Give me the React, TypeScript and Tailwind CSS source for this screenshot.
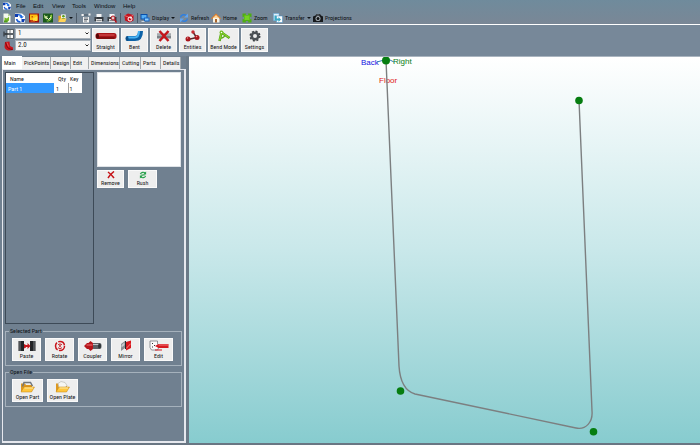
import { useState, type ReactNode } from "react";

function Svg({ box, className, children }: { box: string; className: string; children: ReactNode }) {
  return (
    <svg viewBox={box} className={"block shrink-0 " + className} aria-hidden="true">
      {children}
    </svg>
  );
}

function LogoIcon({ className }: { className: string }) {
  return (
    <Svg box="0 0 20 20" className={className}>
      <path d="M0 1h14l6 5v13H0z" fill="#fff" />
      <path d="M0 2h6v6H0zM13 12h7l-2 6h-5z" fill="#0b3bb0" />
      <path d="M6 2c6 0 8 2 9 5h3l-5 4-5-4h3c-1-2-2-2-5-2z" fill="#1767e0" />
      <path d="M3 12c1 4 4 6 8 6" stroke="#1c5fd6" strokeWidth="3" fill="none" />
    </Svg>
  );
}

function NewIcon() {
  return (
    <Svg box="0 0 16 20" className="h-[10px] w-[8px]">
      <path d="M1 1h9l5 5v13H1z" fill="#f4faee" />
      <path d="M10 1v5h5" fill="#b5d59a" />
      <path d="M3 9l5 2 4-4v8l-4 3-5-2z" fill="#78b82a" />
      <path d="M2 15h7v4H2z" fill="#4d9a1c" />
    </Svg>
  );
}

function YellowIcon() {
  return (
    <Svg box="0 0 20 20" className="size-[10px]">
      <path d="M0 1h20v18H0z" fill="#a11208" />
      <path d="M2 3h15v11H2z" fill="#ffc20e" />
      <path d="M5 6h3v3H5z" fill="#c9530b" />
      <path d="M8 11l9-5v10H8z" fill="#ffdd3c" />
      <path d="M3 16h9" stroke="#f07818" strokeWidth="2" />
    </Svg>
  );
}

function GreenIcon() {
  return (
    <Svg box="0 0 20 20" className="size-[10px]">
      <path d="M0 1h20v18H0z" fill="#1b5a1a" />
      <path d="M2 3l4 4 3-2-1 8-5-3z" fill="#cfe6a0" />
      <path d="M7 15c6 1 8-4 7-10l4-2c1 9-3 14-10 14z" fill="#8cc63e" />
      <path d="M8 10l3 3 5-5" stroke="#f2f8dc" strokeWidth="2" fill="none" />
    </Svg>
  );
}

function OpenPersonIcon() {
  return (
    <Svg box="0 0 20 20" className="size-[9px]">
      <path d="M1 4h6l2 2v12H1z" fill="#e6a31b" />
      <path d="M7 1h10v11H7z" fill="#fff" />
      <circle cx="12" cy="5" r="3" fill="#5a9c1d" />
      <path d="M7 12c1-4 9-4 10 0z" fill="#3b7d12" />
      <path d="M1 18l4-8h14l-3 8z" fill="#ffd257" />
    </Svg>
  );
}

function PageSetupIcon() {
  return (
    <Svg box="0 0 20 20" className="size-[10px]">
      <path d="M1 2h5v4H1zM15 1h4v4h-4zM4 8h12v11H4z" fill="#f2f2f2" />
      <path d="M5 4h9M6 10h8M6 13h8M6 16h6" stroke="#3c4650" strokeWidth="1.5" />
    </Svg>
  );
}

function PrinterIcon({ preview = false }: { preview?: boolean }) {
  return (
    <Svg box="0 0 20 20" className="size-[10px]">
      <path d="M5 2h10v7H5z" fill="#f7f7f7" />
      <path d="M1 8h18v8H1z" fill="#33383e" />
      <path d="M4 12h12v6H4z" fill="#ddd" />
      <path d="M5 15h10M3 10h3" stroke="#6b7075" strokeWidth="1.5" />
      {preview && (
        <>
          <circle cx="12" cy="10" r="4" fill="#e9c7c7" stroke="#b3121c" strokeWidth="2" />
          <path d="M15 13l4 6" stroke="#b3121c" strokeWidth="3" />
        </>
      )}
    </Svg>
  );
}

function RedCubeIcon() {
  return (
    <Svg box="0 0 20 20" className="size-[10px]">
      <path d="M1 5l7-4 11 3v11l-8 4-9-4z" fill="#c4121d" />
      <path d="M1 5l10 4 8-5" stroke="#f18a8a" strokeWidth="1.5" fill="none" />
      <circle cx="12" cy="12" r="4" fill="none" stroke="#fff" strokeWidth="2" />
      <path d="M12 8l4 1-3 3z" fill="#fff" />
    </Svg>
  );
}

function MonitorIcon() {
  return (
    <Svg box="0 0 20 20" className="size-[10px]">
      <path d="M1 2h14v11H1z" fill="#0a4fa8" />
      <path d="M3 4h10v7H3z" fill="#55aef5" />
      <path d="M8 9h11v8H8z" fill="#1666c5" />
      <path d="M10 11h7v4h-7z" fill="#8ccdfc" />
      <path d="M3 16h6v2H3z" fill="#ccd7e0" />
    </Svg>
  );
}

function RefreshIcon() {
  return (
    <Svg box="0 0 20 20" className="size-[10px]">
      <path d="M3 9c1-6 8-7 12-4M17 11c-1 6-8 7-12 4" fill="none" stroke="#2f7fe0" strokeWidth="3" />
      <path d="M18 1v8h-8zM2 19v-8h8z" fill="#5fa4f2" />
    </Svg>
  );
}

function HomeIcon() {
  return (
    <Svg box="0 0 20 20" className="size-[10px]">
      <path d="M4 9h13v10H4z" fill="#fbf3e2" />
      <path d="M0 11L10 1l10 10-2 1-8-7-8 7z" fill="#e87e22" />
      <path d="M10 4l6 6H4z" fill="#ffd9a0" />
      <path d="M8 12h4v7H8z" fill="#a7632a" />
    </Svg>
  );
}

function ZoomIcon() {
  return (
    <Svg box="0 0 20 20" className="size-[10px]">
      <path d="M1 1h8L7 4h6l-2-3h8v8l-3-2v6l3-2v8h-8l2-3H7l2 3H1v-8l3 2V7L1 9z" fill="#4fae12" />
      <path d="M5 5h10v9H5z" fill="#74d024" />
    </Svg>
  );
}

function TransferIcon() {
  return (
    <Svg box="0 0 20 20" className="size-[10px]">
      <path d="M1 1h11v14H1z" fill="#dff1fc" stroke="#5aa5d8" />
      <path d="M7 6h12v13H7z" fill="#fff" stroke="#3f8fc9" />
      <path d="M3 5h4v6h4V8l5 5-5 5v-3H3z" fill="#39a8c4" />
    </Svg>
  );
}

function CameraIcon() {
  return (
    <Svg box="0 0 20 20" className="size-[10px]">
      <path d="M0 7l5-2 2-3h7l2 3 4 2v11H0z" fill="#16191c" />
      <circle cx="10" cy="11" r="5" fill="#a9b2ba" />
      <circle cx="10" cy="11" r="3" fill="#101214" />
      <path d="M7 4h6" stroke="#9aa3ab" strokeWidth="1.5" />
    </Svg>
  );
}

function MachineIcon() {
  return (
    <Svg box="0 0 22 20" className="h-[10px] w-[11px]">
      <path d="M8 1h13v8H8zM8 11h13v8H8z" fill="#f7f7f7" stroke="#3a4046" strokeWidth="1.5" />
      <path d="M14 2v6M14 12v6" stroke="#3a4046" strokeWidth="1.5" />
      <path d="M3 8h6v4H3z" fill="#3a4046" />
      <path d="M2 5v10" stroke="#22262a" strokeWidth="2" />
    </Svg>
  );
}

function DieIcon() {
  return (
    <Svg box="0 0 22 20" className="h-[10px] w-[11px]">
      <path d="M4 2l9-1 1 9 6 3v5l-8 1c-5 0-8-3-9-7z" fill="#c9141c" />
      <path d="M5 3l3 8c1 3 4 5 11 6" stroke="#7d0a0f" strokeWidth="2" fill="none" />
      <path d="M8 3l3 8" stroke="#f2686a" strokeWidth="1.5" />
    </Svg>
  );
}

function StraightIcon() {
  return (
    <Svg box="0 0 44 20" className="h-[10px] w-[22px]">
      <rect x="1" y="4" width="42" height="12" rx="5" fill="#a8161a" />
      <path d="M6 8h33" stroke="#dd5a5a" strokeWidth="2" />
      <path d="M5 14h34" stroke="#64090b" strokeWidth="2" />
      <ellipse cx="5" cy="10" rx="3" ry="5" fill="#520607" />
    </Svg>
  );
}

function BentIcon() {
  return (
    <Svg box="0 0 40 24" className="h-[12px] w-[20px]">
      <path d="M4 17h16q11 0 11-15" stroke="#0c62a8" strokeWidth="10" fill="none" />
      <path d="M5 15h14q9 0 9-13" stroke="#49b2f3" strokeWidth="4" fill="none" />
      <ellipse cx="4" cy="17" rx="3" ry="5" fill="#0a4e88" />
    </Svg>
  );
}

function DeleteIcon() {
  return (
    <Svg box="0 0 32 24" className="h-[12px] w-[16px]">
      <path d="M2 7h28v10H2z" fill="#7c8288" />
      <path d="M2 10h28" stroke="#d0d3d6" strokeWidth="2" />
      <path d="M7 2l18 20M25 2L7 22" stroke="#c4151b" strokeWidth="5" />
    </Svg>
  );
}

function EntitiesIcon() {
  return (
    <Svg box="0 0 30 24" className="h-[12px] w-[15px]">
      <path d="M6 19L23 15 16 4" stroke="#55282b" strokeWidth="3" fill="none" />
      <circle cx="6" cy="18" r="5" fill="#a9151c" />
      <circle cx="24" cy="15" r="5" fill="#a9151c" />
      <circle cx="16" cy="4" r="3.5" fill="#c52a30" />
      <circle cx="23" cy="13" r="1.5" fill="#f08c8c" />
      <circle cx="5" cy="16" r="1.5" fill="#f08c8c" />
    </Svg>
  );
}

function BendModeIcon() {
  return (
    <Svg box="0 0 28 24" className="h-[12px] w-[14px]">
      <path d="M5 22L9 5l16 11" stroke="#4f9e10" strokeWidth="5" fill="none" />
      <path d="M5 21L9 5l15 10" stroke="#8ed633" strokeWidth="2.5" fill="none" />
      <path d="M8 16q6 0 8-6" stroke="#5eae1b" strokeWidth="2.5" fill="none" />
      <circle cx="9" cy="5" r="4" fill="#72bf22" />
      <circle cx="9" cy="5" r="1.5" fill="#fff" />
    </Svg>
  );
}

function GearIcon() {
  return (
    <Svg box="0 0 24 24" className="size-[12px]">
      <circle cx="12" cy="12" r="9.5" fill="none" stroke="#3b3f43" strokeWidth="3" strokeDasharray="4 3.46" />
      <circle cx="12" cy="12" r="6.5" fill="none" stroke="#4b5054" strokeWidth="5" />
    </Svg>
  );
}

function RemoveIcon() {
  return (
    <Svg box="0 0 16 16" className="size-[8px]">
      <path d="M2 2q7 5 12 12M14 1Q7 6 2 14" stroke="#c61217" strokeWidth="3" fill="none" />
    </Svg>
  );
}

function RushIcon() {
  return (
    <Svg box="0 0 18 18" className="size-[8px]">
      <path d="M3 7c2-5 8-5 11-2M15 11c-2 5-8 5-11 2M5 9h8" fill="none" stroke="#23a047" strokeWidth="2.5" />
      <path d="M16 1v7H9zM2 17v-7h7z" fill="#23a047" />
    </Svg>
  );
}

function PasteIcon() {
  return (
    <Svg box="0 0 36 24" className="h-[12px] w-[18px]">
      <path d="M1 2h11v20H1zM24 2h11v20H24z" fill="#222427" />
      <path d="M4 2v20M32 2v20" stroke="#7c8085" strokeWidth="2" />
      <path d="M12 8l4 2v5l-4 2z" fill="#c7161c" />
      <path d="M15 10h4V6l6 6-6 6v-4h-4z" fill="#c7161c" />
    </Svg>
  );
}

function RotateIcon() {
  return (
    <Svg box="0 0 24 24" className="size-[12px]">
      <circle cx="12" cy="12" r="9" fill="none" stroke="#c8151c" strokeWidth="3" strokeDasharray="16 2.85" />
      <path d="M8 10a5 5 0 0 1 8 0M16 15a5 5 0 0 1-8 0" fill="none" stroke="#c8151c" strokeWidth="2" />
      <circle cx="12" cy="12" r="1.8" fill="#c8151c" />
    </Svg>
  );
}

function CouplerIcon() {
  return (
    <Svg box="0 0 36 24" className="h-[12px] w-[18px]">
      <rect x="15" y="6" width="20" height="12" rx="4" fill="#5b6065" />
      <path d="M18 9h13" stroke="#c0c4c8" strokeWidth="2" />
      <ellipse cx="31" cy="12" rx="3" ry="5" fill="#303438" />
      <path d="M0 12l6-6h3l4-4 5 4v12l-5 4-4-4H6z" fill="#b5151b" />
      <path d="M5 10h12" stroke="#ee7074" strokeWidth="2" />
    </Svg>
  );
}

function MirrorIcon() {
  return (
    <Svg box="0 0 26 24" className="h-[12px] w-[13px]">
      <path d="M4 8l8-6v14l-8 6z" fill="#8b9095" />
      <path d="M5 10l6-5v5l-6 5z" fill="#c9cdd1" />
      <path d="M12 2h2v16h-2z" fill="#24272a" />
      <path d="M14 4l10-3v15l-10 5z" fill="#d8171d" />
      <path d="M15 15l8-9v3l-8 9z" fill="#f26a6c" />
    </Svg>
  );
}

function EditPartIcon() {
  return (
    <Svg box="0 0 40 24" className="h-[12px] w-[20px]">
      <path d="M2 2h15v6l4 4-4 8H5l-3-5z" fill="#fafafa" stroke="#6f7478" strokeWidth="1.5" />
      <path d="M6 7h2M10 11h2M6 14h2" stroke="#333" strokeWidth="2" />
      <path d="M12 12l7-4h20v8H19z" fill="#d51b21" />
      <path d="M19 10h19" stroke="#f4797c" strokeWidth="2" />
      <path d="M12 20h14" stroke="#d51b21" strokeWidth="2" />
    </Svg>
  );
}

function FolderIcon({ plate = false }: { plate?: boolean }) {
  return (
    <Svg box="0 0 30 24" className="h-[12px] w-[15px]">
      <path d="M2 5h8l2 3h12v13H2z" fill="#dd9820" />
      {plate ? (
        <path d="M6 5l6-4 8 2 4 6-5 6H8z" fill="#f6f6f2" stroke="#a6a69c" />
      ) : (
        <path d="M5 11L8 3h13l4 7" fill="none" stroke="#72777c" strokeWidth="3" />
      )}
      <path d="M2 22l6-10h21l-6 10z" fill="#ffc63c" stroke="#c28112" />
      <path d="M9 14h17" stroke="#ffe9a4" strokeWidth="2" />
    </Svg>
  );
}

function Caret() {
  return (
    <Svg box="0 0 4 4" className="size-[4px]">
      <path d="M0 1h4L2 3z" fill="#101418" />
    </Svg>
  );
}

function IconButton({ label, icon }: { label: string; icon: ReactNode }) {
  return (
    <button type="button" aria-label={label} className="flex h-3 shrink-0 items-center gap-[2px]">
      {icon}
    </button>
  );
}

function Separator() {
  return <span className="h-[10px] w-px shrink-0 bg-[#4c5a68]" />;
}

function TextTool({ label, icon, caret = false, width }: { label: string; icon: ReactNode; caret?: boolean; width: string }) {
  return (
    <button type="button" className={"flex h-3 shrink-0 items-center gap-[2px] whitespace-nowrap " + width}>
      {icon}
      <span>{label}</span>
      {caret && <Caret />}
    </button>
  );
}

function Tile({ label, icon, size }: { label: string; icon: ReactNode; size: string }) {
  return (
    <button
      type="button"
      className={
        "flex shrink-0 flex-col items-center justify-between whitespace-nowrap border border-[#fafafa] bg-[#eeeeee] text-[6px] leading-[8px] text-[#141414] " +
        size
      }
    >
      <span className="flex flex-1 items-center">{icon}</span>
      <span>{label}</span>
    </button>
  );
}

function Combo({ label, options, icon }: { label: string; options: string[]; icon: ReactNode }) {
  return (
    <label className="flex h-[11px] items-center gap-px">
      {icon}
      <span className="relative block">
        <select
          aria-label={label}
          className="block h-[11px] w-[76px] appearance-none border border-[#a9b1b9] bg-[#f6f6f6] pl-[2px] text-[7px] leading-[9px] text-[#1b1b1b]"
        >
          {options.map((o) => (
            <option key={o}>{o}</option>
          ))}
        </select>
        <svg viewBox="0 0 8 6" className="pointer-events-none absolute top-1 right-[2px] h-[3px] w-1" aria-hidden="true">
          <path d="M1 1l3 3 3-3" fill="none" stroke="#222" strokeWidth="2" />
        </svg>
      </span>
    </label>
  );
}

const tabs = [
  { name: "Main", size: "w-[20px]" },
  { name: "PickPoints", size: "w-[29px]" },
  { name: "Design", size: "w-[20px]" },
  { name: "Edit", size: "w-[18px]" },
  { name: "Dimensions", size: "w-[31px]" },
  { name: "Cutting", size: "w-[21px]" },
  { name: "Parts", size: "w-[20px]" },
  { name: "Details", size: "w-[20px]" },
];

function Group({ title, children }: { title: string; children: ReactNode }) {
  return (
    <fieldset className="mx-[2px] min-w-0 border border-[#a5b1bc] px-[6px] pb-[4px]">
      <legend className="-ml-[3px] px-px text-[6px] leading-[8px] text-[#0c1014]">{title}</legend>
      <div className="flex gap-1 pt-[3px]">{children}</div>
    </fieldset>
  );
}

function Viewport() {
  return (
    <main className="min-w-0 flex-1 border-t border-[#aab5c0] bg-linear-to-b from-white via-[#c9e8ea] to-[#87cccf]">
      <svg viewBox="0 0 511 386" className="block h-full w-full" role="img" aria-label="Bent part model">
        <g transform="translate(-189 -57)" className="font-['Liberation_Sans',sans-serif]">
          <g fontSize="8">
            <text x="361" y="65" fill="#1414e0">Back</text>
            <text x="393" y="64" fill="#0a7d14">Right</text>
            <text x="379" y="83" fill="#e01818">Floor</text>
          </g>
          <path d="M377 62l7-2M388 59l6 3" stroke="#2f7fae" fill="none" />
          <path
            d="M386 60L399 366C400 382 405 391 415 394L576 428C586 430 593 422 592 411L579 100"
            fill="none"
            stroke="#7c7f80"
            strokeWidth="1.4"
          />
          <g fill="#067d10">
            <circle cx="386" cy="60.5" r="4" />
            <circle cx="579" cy="100.5" r="3.8" />
            <circle cx="400.5" cy="391" r="3.8" />
            <circle cx="593.5" cy="431.8" r="3.8" />
          </g>
        </g>
      </svg>
    </main>
  );
}

export default function App() {
  const [tab, setTab] = useState("Main");
  return (
    <div className="flex h-screen flex-col overflow-hidden bg-[#788898] font-['Roboto_Condensed','Liberation_Sans',sans-serif] text-[#0c1014]">
      <header className="bg-linear-to-b from-[#6f8b9c] to-[#7a8796] text-[6px] leading-[8px]">
        <nav className="flex h-3 items-center pl-[3px] font-['Liberation_Sans',sans-serif]">
          <LogoIcon className="mr-[5px] size-[8px]" />
          <button type="button" className="w-[17px] text-left">File</button>
          <button type="button" className="w-[19px] text-left">Edit</button>
          <button type="button" className="w-[20px] text-left">View</button>
          <button type="button" className="w-[22px] text-left">Tools</button>
          <button type="button" className="w-[29px] text-left">Window</button>
          <button type="button" className="w-[20px] text-left">Help</button>
        </nav>
        <div className="flex h-3 items-center pl-[3px]">
          <div className="flex items-center gap-1">
            <IconButton label="New" icon={<NewIcon />} />
            <IconButton label="Part" icon={<LogoIcon className="size-[10px]" />} />
            <IconButton label="Assembly" icon={<YellowIcon />} />
            <IconButton label="Bend" icon={<GreenIcon />} />
          </div>
          <div className="flex w-[23px] justify-end pr-[3px]">
            <IconButton label="Open" icon={<><OpenPersonIcon /><Caret /></>} />
          </div>
          <Separator />
          <div className="flex w-[43px] items-center justify-center gap-[3px]">
            <IconButton label="Page setup" icon={<PageSetupIcon />} />
            <IconButton label="Print" icon={<PrinterIcon />} />
            <IconButton label="Print preview" icon={<PrinterIcon preview />} />
          </div>
          <Separator />
          <div className="flex w-[16px] justify-center">
            <IconButton label="Rotate view" icon={<RedCubeIcon />} />
          </div>
          <Separator />
          <div className="flex pl-[2px]">
            <TextTool label="Display" icon={<MonitorIcon />} caret width="w-[39px]" />
            <TextTool label="Refresh" icon={<RefreshIcon />} width="w-[32px]" />
            <TextTool label="Home" icon={<HomeIcon />} width="w-[31px]" />
            <TextTool label="Zoom" icon={<ZoomIcon />} width="w-[31px]" />
            <TextTool label="Transfer" icon={<TransferIcon />} caret width="w-[40px]" />
            <TextTool label="Projections" icon={<CameraIcon />} width="w-[42px]" />
          </div>
        </div>
      </header>

      <section className="flex h-8 shrink-0 items-start border-t border-white bg-[#778899] pt-[3px] pl-[3px]">
        <div className="mr-px flex flex-col gap-px">
          <Combo label="Machine" options={["1"]} icon={<MachineIcon />} />
          <Combo label="Die radius" options={["2.0"]} icon={<DieIcon />} />
        </div>
        <div className="flex gap-[2px]">
          <Tile label="Straight" icon={<StraightIcon />} size="h-[24px] w-[27px]" />
          <Tile label="Bent" icon={<BentIcon />} size="h-[24px] w-[27px]" />
          <Tile label="Delete" icon={<DeleteIcon />} size="h-[24px] w-[27px]" />
          <Tile label="Entities" icon={<EntitiesIcon />} size="h-[24px] w-[27px]" />
          <Tile label="Bend Mode" icon={<BendModeIcon />} size="h-[24px] w-[31px]" />
          <Tile label="Settings" icon={<GearIcon />} size="h-[24px] w-[27px]" />
        </div>
      </section>

      <div className="flex min-h-0 flex-1 border-b-2 border-[#697683]">
        <aside className="flex w-[189px] shrink-0 flex-col border-r-3 border-[#6b7a88] bg-[#708090] pl-[2px]">
          <div role="tablist" className="flex h-[13px] items-end pr-1">
            {tabs.map((t) => (
              <button
                key={t.name}
                type="button"
                role="tab"
                aria-selected={tab === t.name}
                onClick={() => setTab(t.name)}
                className={
                  "shrink-0 whitespace-nowrap pl-[2px] text-left text-[6px] leading-[10px] text-[#141414] " +
                  t.size +
                  (tab === t.name ? " h-[13px] bg-white" : " h-[12px] border-r border-[#a3a9ae] bg-[#f0f0f0]")
                }
              >
                {t.name}
              </button>
            ))}
          </div>
          <div className="flex min-h-0 flex-1 flex-col border-2 border-t border-l border-[#e6e8ee] pt-[2px]">
            <div className="flex min-h-0 flex-1 gap-[3px] pr-[3px] pl-[2px]">
              <div className="w-[89px] border border-[#3d4a57]">
                <table className="table-fixed border-collapse text-[6px] leading-[9px] text-[#141414]">
                  <colgroup>
                    <col className="w-[48px]" />
                    <col className="w-[14px]" />
                    <col className="w-[14px]" />
                  </colgroup>
                  <thead>
                    <tr className="h-[10px] bg-white">
                      <th className="p-0 pl-1 text-left font-normal">Name</th>
                      <th className="p-0 pl-1 text-left font-normal">Qty</th>
                      <th className="p-0 pl-[2px] text-left font-normal">Key</th>
                    </tr>
                  </thead>
                  <tbody>
                    <tr className="h-[10px] bg-white">
                      <td className="bg-[#3399ff] p-0 pl-[2px] text-white">Part 1</td>
                      <td className="border-r border-[#a0a0a0] p-0 pl-[2px]">1</td>
                      <td className="p-0 pl-px">1</td>
                    </tr>
                  </tbody>
                </table>
              </div>
              <div className="flex flex-1 flex-col">
                <div className="h-[95px] border border-[#dfe3e7] bg-white" />
                <div className="flex gap-1 pt-[3px]">
                  <Tile label="Remove" icon={<RemoveIcon />} size="h-[18px] w-[27px]" />
                  <Tile label="Rush" icon={<RushIcon />} size="h-[18px] w-[29px]" />
                </div>
              </div>
            </div>
            <div className="flex flex-col gap-[2px] pt-[3px] pb-[34px]">
              <Group title="Selected Part">
                <Tile label="Paste" icon={<PasteIcon />} size="h-[23px] w-[29px]" />
                <Tile label="Rotate" icon={<RotateIcon />} size="h-[23px] w-[29px]" />
                <Tile label="Coupler" icon={<CouplerIcon />} size="h-[23px] w-[29px]" />
                <Tile label="Mirror" icon={<MirrorIcon />} size="h-[23px] w-[29px]" />
                <Tile label="Edit" icon={<EditPartIcon />} size="h-[23px] w-[29px]" />
              </Group>
              <Group title="Open File">
                <Tile label="Open Part" icon={<FolderIcon />} size="h-[23px] w-[31px]" />
                <Tile label="Open Plate" icon={<FolderIcon plate />} size="h-[23px] w-[31px]" />
              </Group>
            </div>
          </div>
        </aside>
        <Viewport />
      </div>
    </div>
  );
}
